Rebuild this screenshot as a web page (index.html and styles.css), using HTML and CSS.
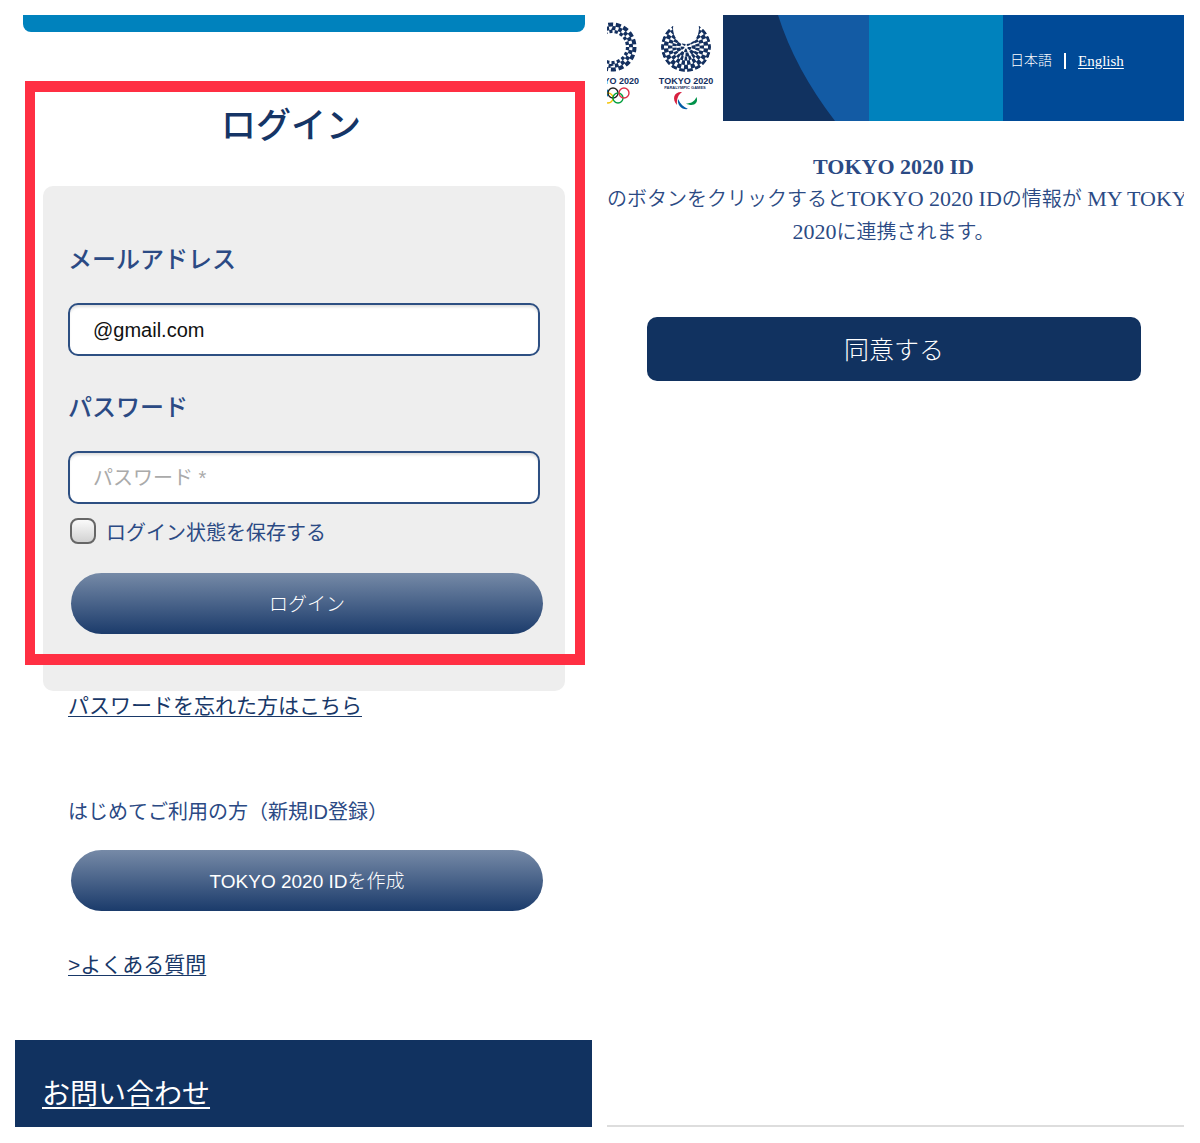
FILE: index.html
```html
<!DOCTYPE html>
<html lang="ja">
<head>
<meta charset="utf-8">
<meta name="viewport" content="width=device-width, initial-scale=1">
<title>TOKYO 2020 ID ログイン</title>
<link rel="stylesheet" href="styles.css">
</head>
<body>
<div class="screens">
  <section class="screen login">
    <div class="top-strip"></div>
    <main class="login-main">
      <h1 class="title">ログイン</h1>
      <form class="card">
        <label class="field-label" for="email">メールアドレス</label>
        <input class="field" id="email" type="text" value="@gmail.com">
        <label class="field-label" for="password">パスワード</label>
        <input class="field" id="password" type="password" placeholder="パスワード *">
        <div class="remember">
          <input class="check" id="remember" type="checkbox">
          <label for="remember">ログイン状態を保存する</label>
        </div>
        <button class="pill" type="button">ログイン</button>
      </form>
      <div class="highlight"></div>
    </main>
    <div class="more">
      <a class="link" href="#forgot">パスワードを忘れた方はこちら</a>
      <p class="first-time">はじめてご利用の方（新規ID登録）</p>
      <button class="pill" type="button">TOKYO 2020 IDを作成</button>
      <a class="link faq" href="#faq">&gt;よくある質問</a>
    </div>
    <footer class="footer">
      <a class="contact" href="#contact">お問い合わせ</a>
    </footer>
  </section>

  <section class="screen consent">
    <header class="header">
      <svg class="logos" viewBox="0 0 116 106" role="img" aria-label="TOKYO 2020">
        <defs>
          <mask id="crescent">
            <circle cx="79" cy="32" r="25" fill="#fff"/>
            <ellipse cx="79" cy="13" rx="13" ry="16" fill="#000"/>
            <path d="M64 0h30v11H64z" fill="#000"/>
          </mask>
        </defs>
        <g fill="none" stroke="#14305f">
          <circle cx="5" cy="32" r="22.500" stroke-width="4" pathLength="36" stroke-dasharray="1.300 .7"/>
          <circle cx="5" cy="32" r="19" stroke-width="4" pathLength="36" stroke-dasharray="1.100 .9" stroke-dashoffset="1"/>
          <circle cx="5" cy="32" r="15.600" stroke-width="3.400" pathLength="36" stroke-dasharray="1.200 .8"/>
        </g>
        <g fill="none" stroke="#14305f" mask="url(#crescent)">
          <circle cx="79" cy="32" r="23.500" stroke-width="3" pathLength="36" stroke-dasharray="1.400 .6" stroke-dashoffset=".7"/>
          <circle cx="79" cy="32" r="20" stroke-width="4.400" pathLength="36" stroke-dasharray="1.200 .8" stroke-dashoffset="1.600"/>
          <circle cx="79" cy="32" r="15.800" stroke-width="4.400" pathLength="36" stroke-dasharray="1.200 .8" stroke-dashoffset=".6"/>
          <circle cx="79" cy="32" r="11.600" stroke-width="4.200" pathLength="36" stroke-dasharray="1.300 .7" stroke-dashoffset="1.600"/>
          <circle cx="79" cy="32" r="7.600" stroke-width="4" pathLength="18" stroke-dasharray="1.300 .7" stroke-dashoffset=".6"/>
          <circle cx="79" cy="32" r="3.500" stroke-width="3.500" pathLength="10" stroke-dasharray="1.200 .8"/>
        </g>
        <g class="logo-name">
          <text x="32" y="69" text-anchor="end">YO 2020</text>
          <text x="79" y="69" text-anchor="middle">TOKYO 2020</text>
        </g>
        <text class="logo-sub" x="78" y="74" text-anchor="middle">PARALYMPIC GAMES</text>
        <g fill="none" stroke-width="1.400">
          <circle cx="-4" cy="78" r="5" stroke="#0085c7"/>
          <circle cx="1" cy="83" r="5" stroke="#f4c300"/>
          <circle cx="6" cy="78" r="5" stroke="#222"/>
          <circle cx="11" cy="83" r="5" stroke="#009f3d"/>
          <circle cx="17" cy="78" r="5" stroke="#df3048"/>
        </g>
        <path d="M75 77c-8-.500-10.500 7-5 13-.500-6 1-10 5-13z" fill="#d7203f"/>
        <path d="M71 84c-1 6.500 4 11 10 10-4.500-2-7.500-5-10-10z" fill="#005ba5"/>
        <path d="M89.500 82c2.500 7-4 10-10.500 6.500 5 0 8.500-2 10.500-6.500z" fill="#00924a"/>
      </svg>
      <div class="banner">
        <svg class="band-curve" viewBox="0 0 146 106" preserveAspectRatio="none" aria-hidden="true">
          <path d="M0 0h146v106H0z" fill="#135ba4"/>
          <path d="M0 0h55Q72 54 112 106H0z" fill="#113260"/>
        </svg>
        <div class="band-sky"></div>
        <nav class="languages">
          <span>日本語</span>
          <span class="divider"></span>
          <a class="english" href="#en">English</a>
        </nav>
      </div>
    </header>
    <div class="message">
      <h2 class="message-title">TOKYO 2020 ID</h2>
      <p class="message-line">のボタンをクリックすると<span class="latin">TOKYO 2020 ID</span>の情報が<span class="latin"> MY TOKY</span></p>
      <p class="message-end"><span class="latin">2020</span>に連携されます。</p>
    </div>
    <button class="agree" type="button">同意する</button>
  </section>
</div>
</body>
</html>
```
FILE: styles.css
```css
* {
  box-sizing: border-box;
}

body {
  margin: 0;
  background: #fff;
  color: #2b4a84;
  font-family: "Liberation Sans", "Noto Sans CJK JP", sans-serif;
}

h1, h2, p {
  margin: 0;
}

button, input {
  font-family: inherit;
}

.screens {
  display: grid;
  grid-template-columns: minmax(0, 1fr) minmax(0, 1fr);
  gap: 15px;
  padding: 15px 16px 16px 15px;
}

.screen {
  display: flex;
  flex-direction: column;
  overflow: hidden;
}

/* Login */

.top-strip {
  height: 17px;
  margin: 0 7px 0 8px;
  border-radius: 0 0 8px 8px;
  background: #0082bd;
}

.login-main {
  position: relative;
  padding: 69px 27px 0 28px;
}

.title {
  margin-bottom: 35px;
  padding-right: 26px;
  color: #153566;
  font-size: 35px;
  font-weight: 500;
  line-height: 50px;
  text-align: center;
}

.card {
  padding: 56px 25px 57px;
  border-radius: 10px;
  background: #eee;
}

.field-label {
  display: block;
  margin-bottom: 25px;
  font-size: 24px;
  font-weight: 500;
  line-height: 36px;
}

.field {
  display: block;
  width: 100%;
  height: 53px;
  padding: 2px 23px 0;
  border: 2px solid #2d4f82;
  border-radius: 10px;
  background: #fff;
  box-shadow: inset 0 3px 3px -1px #ddd;
  color: #111;
  font-size: 20px;
}

.field + .field-label {
  margin-top: 34px;
}

.field::placeholder {
  color: #aaa;
}

.remember {
  display: flex;
  gap: 10px;
  margin: 14px 0 25px;
  padding-left: 2px;
  font-size: 20px;
  line-height: 30px;
}

.check {
  width: 26px;
  height: 26px;
  margin: 0;
  appearance: none;
  border: 2px solid #666;
  border-radius: 8px;
  background: linear-gradient(#fafafa, #d2d2d2);
}

.pill {
  display: block;
  width: 100%;
  height: 61px;
  margin-left: 3px;
  padding: 0 0 3px;
  border: 0;
  border-radius: 31px;
  background: linear-gradient(#768aa7, #1b3b6b);
  color: #fff;
  font-size: 19px;
  font-weight: 300;
}

.highlight {
  position: absolute;
  inset: 49px 7px 26px 10px;
  border: solid #ff2f43;
  border-width: 11px 10px;
  pointer-events: none;
}

.more {
  padding: 0 52px 0 53px;
}

.link {
  display: block;
  width: fit-content;
  color: #183868;
  font-size: 21px;
  line-height: 30px;
  text-decoration-thickness: 1px;
  text-underline-offset: 3px;
}

.first-time {
  margin: 76px 0 23px;
  font-size: 20px;
  line-height: 30px;
}

.faq {
  margin: 39px 0 60px;
}

.footer {
  padding: 35px 27px 12px;
  background: #113260;
}

.contact {
  color: #fff;
  font-size: 28px;
  line-height: 40px;
  text-underline-offset: 3px;
}

/* Consent */

.consent {
  border-bottom: 2px solid #ddd;
}

.header {
  display: flex;
  height: 106px;
}

.logos {
  flex: none;
  width: 116px;
  height: 106px;
}

.logo-name {
  fill: #14305f;
  font-size: 9px;
  font-weight: 700;
}

.logo-sub {
  fill: #14305f;
  font-size: 4px;
  font-weight: 700;
}

.banner {
  display: grid;
  flex: 1;
  grid-template-columns: 146fr 134fr 181fr;
}

.band-curve {
  width: 100%;
  height: 106px;
}

.band-sky {
  background: #0082bd;
}

.languages {
  display: flex;
  align-items: center;
  gap: 12px;
  padding: 0 0 14px 7px;
  background: #004a97;
  color: #fff;
  font-family: "Liberation Serif", "Noto Sans CJK JP", serif;
  font-size: 14px;
  font-weight: 300;
  line-height: 20px;
}

.divider {
  width: 2px;
  height: 16px;
  background: #fff;
}

.english {
  color: #fff;
  font-size: 15px;
  text-underline-offset: 2px;
}

.message {
  margin: 29px 0 68px;
  font-family: "Liberation Serif", "Noto Sans CJK JP", serif;
  font-size: 20px;
  font-weight: 350;
  line-height: 33px;
  text-align: center;
}

.message-title,
.message-end {
  padding-right: 4px;
}

.message-title {
  font-size: 22px;
  font-weight: 700;
  line-height: 33px;
}

.message-line {
  text-align: left;
  white-space: nowrap;
}

.latin {
  font-size: 22px;
  line-height: 32px;
}

.agree {
  height: 64px;
  margin: 0 43px 0 40px;
  padding: 0 0 3px;
  border: 0;
  border-radius: 10px;
  background: #113260;
  color: #fff;
  font-size: 25px;
  font-weight: 300;
}
```
